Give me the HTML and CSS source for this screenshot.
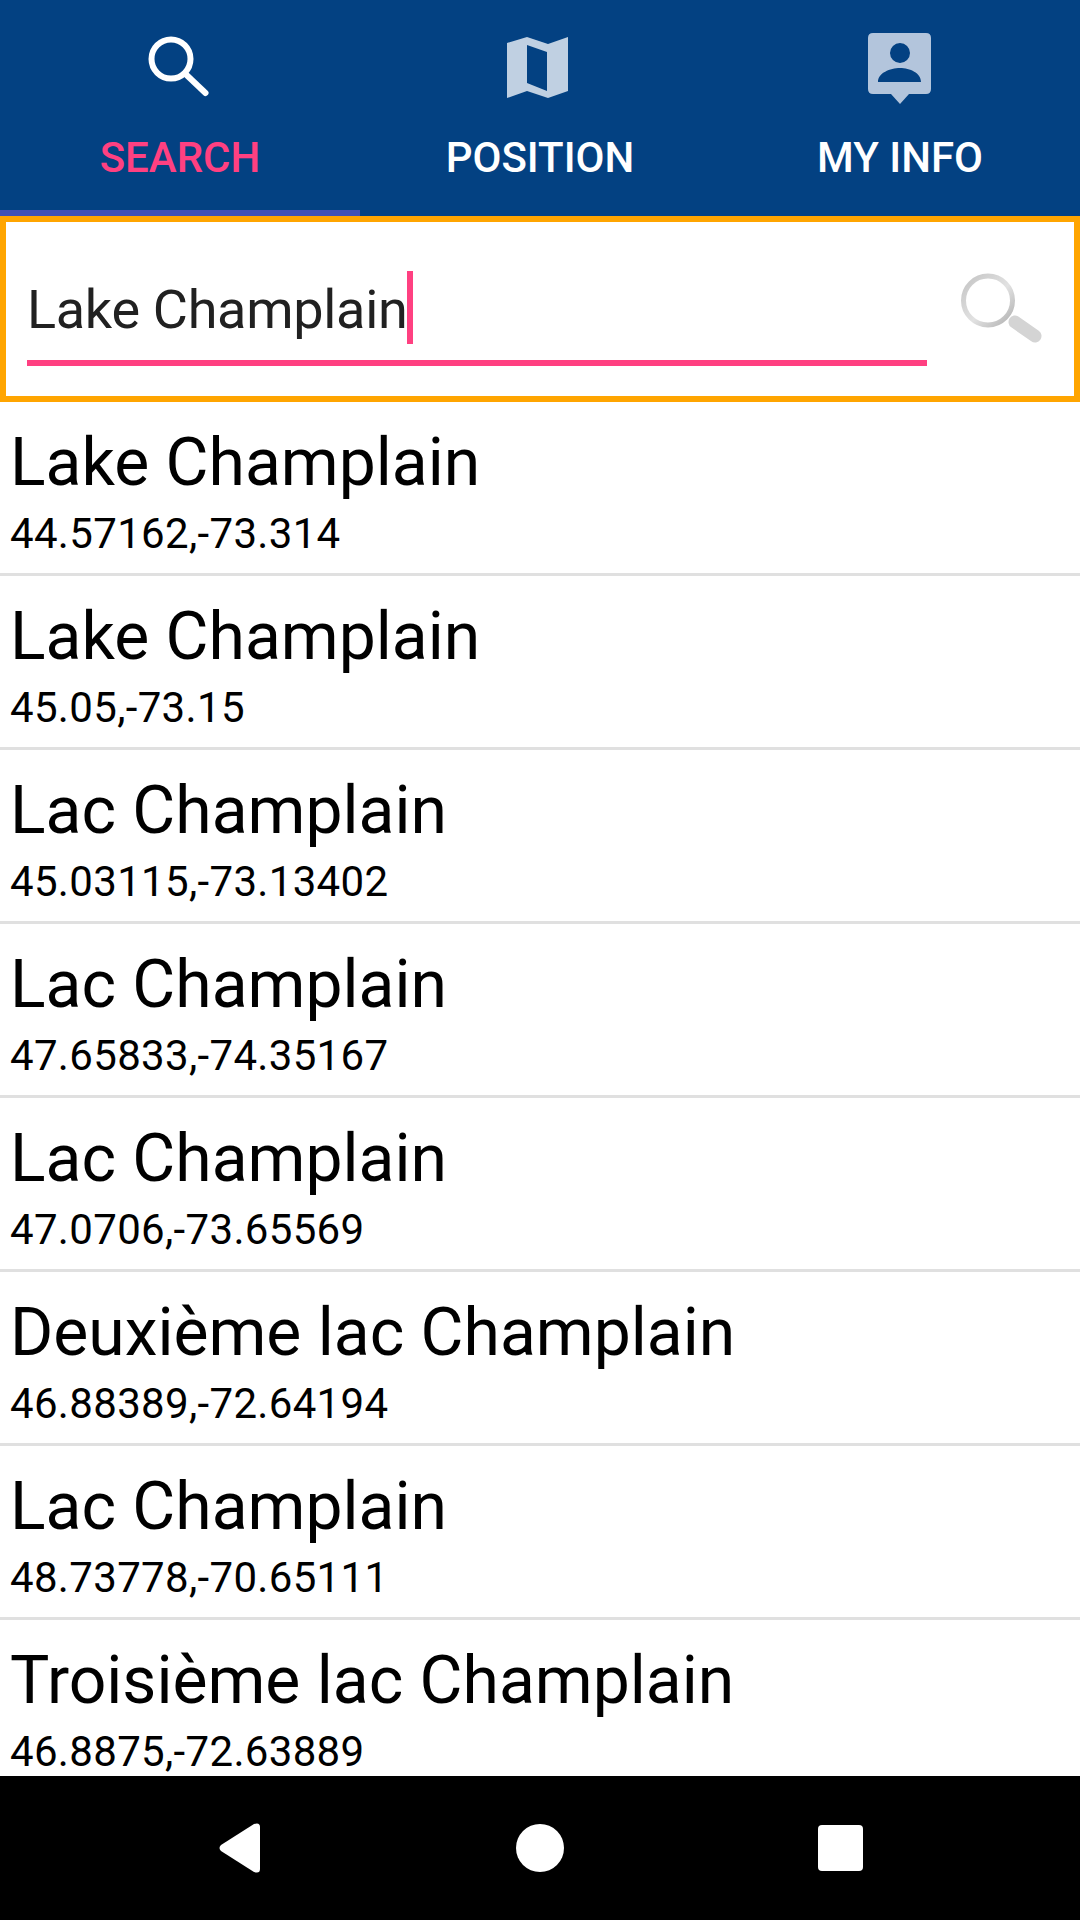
FILE: index.html
```html
<!DOCTYPE html>
<html lang="en">
<head>
    <meta charset="UTF-8">
    <meta name="viewport" content="width=device-width, initial-scale=1.0">
    <title>Search</title>
    <link rel="stylesheet" href="styles.css">
</head>
<body>
    <div class="app">
        <nav class="tabs">
            <div class="tab tab-active">
                <svg class="tab-icon" viewBox="0 0 72 72" width="72" height="72">
                    <circle cx="27" cy="29" r="19.5" fill="none" stroke="#fff" stroke-width="6"/>
                    <path d="M41.5 44 L61.5 63" fill="none" stroke="#fff" stroke-width="6" stroke-linecap="round"/>
                </svg>
                <span class="tab-label">SEARCH</span>
            </div>
            <div class="tab">
                <svg class="tab-icon" viewBox="0 0 72 72" width="72" height="72">
                    <path fill="#c0d0e2" fill-rule="evenodd" d="M3 13 L23 7 L44 14 L64 7 V61 L44 68 L23 61 L3 68 Z M23 15 V53 L43 61 V22 Z"/>
                </svg>
                <span class="tab-label">POSITION</span>
            </div>
            <div class="tab">
                <svg class="tab-icon" viewBox="0 0 72 76" width="72" height="76">
                    <path fill="#b3c5dc" fill-rule="evenodd" d="M9 3 H62 Q67 3 67 8 V59 Q67 64 62 64 H45 L36 74 L27 64 H9 Q4 64 4 59 V8 Q4 3 9 3 Z M36 13 A10 10 0 1 0 36 33 A10 10 0 1 0 36 13 Z M14 52 H57 C57 43 46 38 36 38 C26 38 14 43 14 52 Z"/>
                </svg>
                <span class="tab-label tab-label-tall">MY INFO</span>
            </div>
        </nav>
        <div class="search-box">
            <div class="search-input">
                <span class="search-text">Lake Champlain</span><span class="cursor"></span>
            </div>
            <svg class="search-icon" viewBox="0 0 90 76" width="90" height="76">
                <defs>
                    <linearGradient id="ring" x1="0" y1="0" x2="1" y2="1">
                        <stop offset="0" stop-color="#c4c4c4"/>
                        <stop offset="0.55" stop-color="#e2e2e2"/>
                        <stop offset="1" stop-color="#b0b0b0"/>
                    </linearGradient>
                </defs>
                <path d="M58 52 L78 66" fill="none" stroke="#d4d4d4" stroke-width="13" stroke-linecap="round"/>
                <circle cx="31" cy="30.5" r="24.5" fill="#fff" stroke="url(#ring)" stroke-width="5"/>
            </svg>
        </div>
        <ul class="results">
            <li class="result"><div class="result-name">Lake Champlain</div><div class="result-pos">44.57162,-73.314</div></li>
            <li class="result"><div class="result-name">Lake Champlain</div><div class="result-pos">45.05,-73.15</div></li>
            <li class="result"><div class="result-name">Lac Champlain</div><div class="result-pos">45.03115,-73.13402</div></li>
            <li class="result"><div class="result-name">Lac Champlain</div><div class="result-pos">47.65833,-74.35167</div></li>
            <li class="result"><div class="result-name">Lac Champlain</div><div class="result-pos">47.0706,-73.65569</div></li>
            <li class="result"><div class="result-name">Deuxième lac Champlain</div><div class="result-pos">46.88389,-72.64194</div></li>
            <li class="result"><div class="result-name">Lac Champlain</div><div class="result-pos">48.73778,-70.65111</div></li>
            <li class="result"><div class="result-name">Troisième lac Champlain</div><div class="result-pos">46.8875,-72.63889</div></li>
        </ul>
        <footer class="navbar">
            <div class="nav-slot">
                <svg viewBox="0 0 42 50" width="42" height="50">
                    <path fill="#fff" d="M2 22 L35 1 Q41 -1 41 4 V46 Q41 51 35 49 L2 28 Q-1 25 2 22 Z"/>
                </svg>
            </div>
            <div class="nav-slot"><div class="nav-home"></div></div>
            <div class="nav-slot"><div class="nav-recent"></div></div>
        </footer>
    </div>
</body>
</html>
```

FILE: styles.css
```css
* {
    box-sizing: border-box;
}

body {
    margin: 0;
    padding: 0;
    background-color: #fff;
    font-family: Roboto, sans-serif;
}

.app {
    width: 1080px;
    height: 1920px;
    display: flex;
    flex-direction: column;
    overflow: hidden;
}

.tabs {
    display: flex;
    height: 216px;
    flex-shrink: 0;
    background-color: #034182;
}

.tab {
    flex: 1;
    display: flex;
    flex-direction: column;
    align-items: center;
    padding-top: 30px;
    border-bottom: 6px solid transparent;
    color: #fff;
}

.tab-active {
    color: #ff4081;
    border-bottom-color: #3f51b5;
}

.tab-icon {
    display: block;
}

.tab-label {
    margin-top: 31px;
    font-size: 42px;
    line-height: 50px;
    font-weight: 500;
}

.tab-label-tall {
    margin-top: 27px;
}

.search-box {
    display: flex;
    align-items: flex-start;
    height: 186px;
    flex-shrink: 0;
    padding: 0 0 0 21px;
    border: 6px solid #ffa500;
}

.search-input {
    display: flex;
    align-items: center;
    flex-shrink: 0;
    width: 900px;
    height: 144px;
    padding-top: 37px;
    border-bottom: 6px solid #ff4081;
}

.search-text {
    font-size: 54px;
    letter-spacing: -0.3px;
    color: #212121;
}

.cursor {
    width: 6px;
    height: 73px;
    margin: -4px 0 0 -1px;
    background-color: #ff4081;
}

.search-icon {
    flex-shrink: 0;
    margin: 48px 0 0 30px;
}

.results {
    flex: 1;
    margin: 0;
    padding: 0;
    list-style-type: none;
    overflow: hidden;
}

.result {
    height: 174px;
    padding: 22px 10px 0;
    border-bottom: 3px solid #e0e0e0;
    color: #000;
}

.result-name {
    font-size: 66px;
    line-height: 78px;
}

.result-pos {
    margin-top: 7px;
    font-size: 42px;
    line-height: 50px;
    letter-spacing: 0.33px;
}

.navbar {
    display: flex;
    height: 144px;
    flex-shrink: 0;
    padding: 0 90px;
    background-color: #000;
}

.nav-slot {
    flex: 1;
    display: flex;
    align-items: center;
    justify-content: center;
}

.nav-home {
    width: 48px;
    height: 48px;
    border-radius: 50%;
    background-color: #fff;
}

.nav-recent {
    width: 45px;
    height: 46px;
    border-radius: 4px;
    background-color: #fff;
}
```
